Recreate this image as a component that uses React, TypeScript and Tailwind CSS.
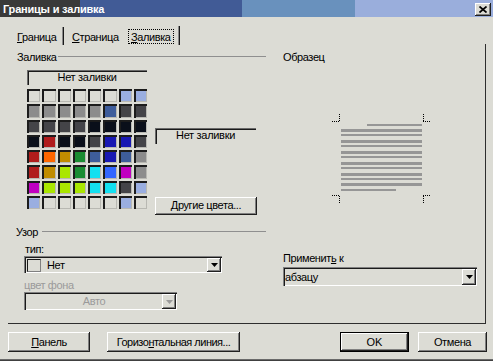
import React from "react";

const E = "";
const G = "#8c8c8c";
const B = "#3e5d9b";
const D = "#444448";
const K = "#0a0f1a";
const R = "#b01c1c";
const N = "#1818b2";
const O = "#ff6600";
const Y = "#c08c00";
const Gr = "#1a8c32";
const L = "#aae600";
const C = "#14e0f0";
const Bl = "#3366ff";
const M = "#c000c0";
const P = "#9aaee0";

const palette: string[][] = [
  [E, E, E, E, E, E, P, P],
  [G, G, G, G, G, B, D, D],
  [D, D, D, D, K, K, K, K],
  [K, R, K, K, D, N, N, D],
  [R, O, Y, Gr, B, N, B, G],
  [R, Y, L, Gr, C, Bl, M, G],
  [M, L, L, L, C, C, D, P],
  [P, E, E, E, E, E, P, E],
];

function Arrow({ disabled }: { disabled?: boolean }) {
  return (
    <div className="w-[14px] h-full flex items-center justify-center bg-[#dcdcd5] shadow-[inset_-1px_-1px_#202020,inset_1px_1px_#ffffff,inset_-2px_-2px_#808080]">
      <svg width="7" height="4" viewBox="0 0 7 4">
        <path d="M0 0h7L3.5 4z" fill={disabled ? "#9a9a9a" : "#000"} />
      </svg>
    </div>
  );
}

function Swatches() {
  return (
    <div className="grid grid-cols-8 grid-rows-8 gap-[2px] w-[120px] h-[120px]">
      {palette.flat().map((c, i) => (
        <div
          key={i}
          className="shadow-[inset_2px_2px_#1c1c1c,inset_-1px_-1px_#b8b8b2]"
          style={{ backgroundColor: c || "#dcdcd5" }}
        />
      ))}
    </div>
  );
}

export default function App() {
  return (
    <div className="w-[493px] h-[361px] bg-[#dcdcd5] overflow-hidden flex flex-col font-['Liberation_Sans',Arial,sans-serif] text-[11px] leading-[13px] text-black shadow-[inset_0_-1px_#404040,inset_0_-2px_#6a6a6a]">
      {/* Title bar */}
      <div className="h-[17px] flex items-start bg-[linear-gradient(90deg,#393939_0px,#393939_80px,#415b96_80px,#415b96_242px,#6991bd_242px,#6991bd_355px,#9aaedc_355px,#9aaedc_100%)]">
        <span className="pl-[3px] pt-[3px] font-bold text-white tracking-[-0.2px]">Границы и заливка</span>
        <div className="ml-auto mr-[2px] mt-[3px] w-[16px] h-[13px] flex items-center justify-center bg-[#dcdcd5] shadow-[inset_-1px_-1px_#202020,inset_1px_1px_#ffffff,inset_-2px_-2px_#808080]">
          <svg width="8" height="7" viewBox="0 0 8 7">
            <path d="M0.5 0.5L7.5 6.5M7.5 0.5L0.5 6.5" stroke="#000" strokeWidth="1.7" />
          </svg>
        </div>
      </div>

      <div className="flex flex-col pl-[8px]">
        {/* Tabs */}
        <div className="mt-[9px] h-[18px] flex items-start">
          <span className="ml-[9px] mt-[5px] w-[45px] tracking-[-0.4px]">
            <u>Г</u>раница
          </span>
          <div className="mt-[1px] h-[18px] w-[2px] border-l border-l-[#8a8a8a] border-r border-r-[#1a1a1a]" />
          <span className="ml-[8px] mt-[5px] w-[56px] tracking-[-0.4px]">
            <u>С</u>траница
          </span>
          <div className="mt-[3px] h-[15px] w-[46px] border border-dotted border-black pl-[2px] pt-[1px] tracking-[-0.4px]">
            <u>З</u>аливка
          </div>
          <div className="ml-[4px] h-[19px] w-[2px] border-l border-l-[#8a8a8a] border-r border-r-[#1a1a1a]" />
        </div>

        {/* Panel */}
        <div className="w-[478px] h-[280px] border-r border-b border-[#2e2e2e] flex pl-[9px] pt-[7px]">
          {/* Left column */}
          <div className="w-[249px] flex flex-col">
            <div className="h-[13px] flex items-start">
              <span className="w-[41px] tracking-[-0.4px]">Заливка</span>
              <div className="flex-1 mt-[5px] h-px bg-[#8f8f8f]" />
            </div>
            <div className="mt-[6px] ml-[10px] w-[120px] h-[15px] flex items-center justify-center shadow-[inset_1px_1px_#6a6a6a,inset_2px_2px_#1a1a1a] tracking-[-0.3px]">
              Нет заливки
            </div>
            <div className="mt-[4px] ml-[10px] h-[126px] flex">
              <Swatches />
              <div className="ml-[8px] flex flex-col">
                <div className="mt-[39px] w-[101px] h-[16px] flex items-center justify-center shadow-[inset_1px_1px_#6a6a6a,inset_2px_2px_#1a1a1a] tracking-[-0.3px]">
                  Нет заливки
                </div>
                <div className="mt-[53px] w-[102px] h-[19px] flex items-center justify-center shadow-[inset_-1px_-1px_#202020,inset_1px_1px_#ffffff,inset_-2px_-2px_#808080] tracking-[-0.4px]">
                  <span>
                    <u>Д</u>ругие цвета...
                  </span>
                </div>
              </div>
            </div>

            <div className="mt-[11px] h-[13px] flex items-start">
              <span className="w-[26px] -ml-px tracking-[-0.4px]">Узор</span>
              <div className="flex-1 mt-[5px] h-px bg-[#8f8f8f]" />
            </div>
            <span className="mt-[4px] ml-[8px] tracking-[-0.4px]">тип:</span>
            <div className="ml-[7px] w-[198px] h-[17px] flex items-stretch pl-[3px] pt-[2px] pr-px pb-px bg-[#dcdcd5] shadow-[inset_1px_1px_#808080,inset_2px_2px_#1a1a1a,inset_-1px_-1px_#ffffff]">
              <div className="flex-1 flex items-center">
                <div className="w-[14px] h-[13px] border border-[#1a1a1a] border-r-[#808080] border-b-[#808080]" />
                <span className="ml-[6px] tracking-[-0.4px]">Нет</span>
              </div>
              <Arrow />
            </div>
            <span className="mt-[6px] ml-[7px] text-[#9a9a9a] tracking-[-0.4px]">цвет фона</span>
            <div className="ml-[7px] w-[153px] h-[18px] flex items-stretch pl-[2px] pt-[2px] pr-px pb-px shadow-[inset_1px_1px_#808080,inset_2px_2px_#1a1a1a,inset_-1px_-1px_#ffffff]">
              <div className="flex-1 flex items-center justify-center text-[#9a9a9a] tracking-[-0.4px]">Авто</div>
              <Arrow disabled />
            </div>
          </div>

          {/* Right column */}
          <div className="ml-[17px] w-[194px] flex flex-col">
            <span className="h-[13px] tracking-[-0.4px]">Образец</span>
            <svg className="mt-[49px] ml-[48px]" width="101" height="92" viewBox="0 0 101 92">
              <g fill="#969696">
                <rect x="36" y="11" width="55" height="2" />
                <rect x="10" y="16" width="81" height="3" />
                <rect x="10" y="21" width="81" height="2" />
                <rect x="10" y="27" width="81" height="3" />
                <rect x="10" y="32" width="81" height="2" />
                <rect x="10" y="38" width="81" height="3" />
                <rect x="10" y="43" width="81" height="2" />
                <rect x="10" y="49" width="81" height="3" />
                <rect x="10" y="54" width="81" height="2" />
                <rect x="10" y="60" width="81" height="3" />
                <rect x="10" y="65" width="81" height="2" />
                <rect x="10" y="70" width="81" height="3" />
                <rect x="10" y="76" width="55" height="2" />
              </g>
              <g stroke="#000" strokeWidth="1" strokeDasharray="1 1" fill="none">
                <path d="M8.5 1v8M1 8.5h8" />
                <path d="M92.5 1v8M92 8.5h8" />
                <path d="M1 82.5h8M8.5 83v8" />
                <path d="M92 82.5h8M92.5 83v8" />
              </g>
            </svg>
            <span className="mt-[47px] tracking-[-0.4px]">
              Применит<u>ь</u> к
            </span>
            <div className="mt-[2px] w-[194px] h-[19px] flex items-stretch pl-[2px] pt-[2px] pr-px pb-px bg-[#dcdcd5] shadow-[inset_1px_1px_#808080,inset_2px_2px_#1a1a1a,inset_-1px_-1px_#ffffff]">
              <div className="flex-1 flex items-center tracking-[-0.4px]">абзацу</div>
              <Arrow />
            </div>
          </div>
        </div>

        {/* Bottom buttons */}
        <div className="mt-[8px] h-[20px] flex">
          <div className="w-[82px] h-[20px] flex items-center justify-center shadow-[inset_-1px_-1px_#202020,inset_1px_1px_#ffffff,inset_-2px_-2px_#808080] tracking-[-0.4px]">
            <span>
              <u>П</u>анель
            </span>
          </div>
          <div className="ml-[17px] w-[133px] h-[20px] flex items-center justify-center shadow-[inset_-1px_-1px_#202020,inset_1px_1px_#ffffff,inset_-2px_-2px_#808080] tracking-[-0.5px]">
            <span>
              Горизо<u>н</u>тальная линия...
            </span>
          </div>
          <div className="ml-[100px] w-[69px] h-[20px] flex items-center justify-center border border-black shadow-[inset_-1px_-1px_#202020,inset_1px_1px_#ffffff,inset_-2px_-2px_#808080]">
            OK
          </div>
          <div className="ml-[9px] w-[69px] h-[20px] flex items-center justify-center shadow-[inset_-1px_-1px_#202020,inset_1px_1px_#ffffff,inset_-2px_-2px_#808080] tracking-[-0.4px]">
            Отмена
          </div>
        </div>
      </div>
    </div>
  );
}
